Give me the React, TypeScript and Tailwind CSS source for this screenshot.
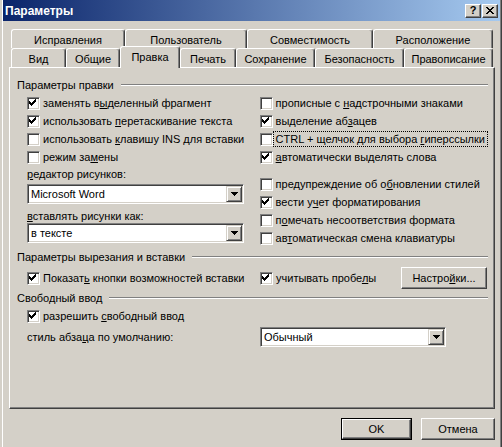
import React from "react";

// access key: the char after "&" gets underlined
function L({ t }: { t: string }) {
  const i = t.indexOf("&");
  if (i < 0) return <>{t}</>;
  return (
    <>
      {t.slice(0, i)}
      <span className="underline decoration-1 underline-offset-[1px]">{t[i + 1]}</span>
      {t.slice(i + 2)}
    </>
  );
}

const raised =
  "bg-[#d4d0c8] border border-t-white border-l-white border-r-[#404040] border-b-[#404040] shadow-[inset_-1px_-1px_0_#808080]";
const sunken =
  "bg-white border border-t-[#808080] border-l-[#808080] border-r-white border-b-white shadow-[inset_1px_1px_0_#404040,inset_-1px_-1px_0_#d4d0c8]";

function Box({ on }: { on?: boolean }) {
  return (
    <span className={`relative block w-[13px] h-[13px] shrink-0 ${sunken}`}>
      {on && (
        <svg className="absolute left-[1px] top-[1px]" width="7" height="7" viewBox="0 0 7 7" shapeRendering="crispEdges">
          {[2, 3, 4, 3, 2, 1, 0].map((y, x) => (
            <rect key={x} x={x} y={y} width="1" height="3" fill="#000" />
          ))}
        </svg>
      )}
    </span>
  );
}

function Check({ on, t, focus }: { on?: boolean; t: string; focus?: boolean }) {
  return (
    <div className="flex h-[18px] items-center">
      <Box on={on} />
      <span
        className={`border px-[2px] leading-[14px] whitespace-nowrap ${
          focus ? "border-dotted border-black" : "border-transparent"
        }`}
      >
        <L t={t} />
      </span>
    </div>
  );
}

function Arrow() {
  return (
    <svg width="7" height="4" viewBox="0 0 7 4" shapeRendering="crispEdges">
      <rect x="0" y="0" width="7" height="1" fill="#000" />
      <rect x="1" y="1" width="5" height="1" fill="#000" />
      <rect x="2" y="2" width="3" height="1" fill="#000" />
      <rect x="3" y="3" width="1" height="1" fill="#000" />
    </svg>
  );
}

function Combo({ w, t }: { w: string; t: string }) {
  return (
    <div className={`flex h-[20px] ${w} ${sunken} p-[1px]`}>
      <span className="flex-1 pl-[2px] leading-[16px] whitespace-nowrap">{t}</span>
      <div className={`w-[16px] h-[16px] flex items-center justify-center border border-t-[#d4d0c8] border-l-[#d4d0c8] border-r-[#404040] border-b-[#404040] bg-[#d4d0c8] shadow-[inset_1px_1px_0_#fff,inset_-1px_-1px_0_#808080]`}>
        <Arrow />
      </div>
    </div>
  );
}

function Group({ t }: { t: string }) {
  return (
    <div className="flex h-[18px] items-center">
      <span className="whitespace-nowrap">{t}</span>
      <div className="ml-[7px] flex-1 border-t border-t-[#808080] border-b border-b-white" />
    </div>
  );
}

function Tab({ w, t, sel }: { w: string; t: string; sel?: boolean }) {
  return (
    <div
      className={`${w} ${
        sel ? "h-[22px] -mb-px relative z-10" : "h-[19px] pt-[3px]"
      } flex items-center justify-center shrink-0 bg-[#d4d0c8] border-t border-l border-r border-t-white border-l-white border-r-[#404040] shadow-[inset_-1px_0_0_#808080] rounded-t-[3px] whitespace-nowrap`}
    >
      {t}
    </div>
  );
}

function TBtn({ children }: { children: React.ReactNode }) {
  return <div className={`w-[16px] h-[14px] flex items-center justify-center ${raised}`}>{children}</div>;
}

function CloseGlyph() {
  const rows = ["XX....XX", ".XX..XX.", "..XXXX..", "...XX...", "..XXXX..", ".XX..XX.", "XX....XX"];
  return (
    <svg width="8" height="7" viewBox="0 0 8 7" shapeRendering="crispEdges">
      {rows.flatMap((r, y) =>
        r.split("").map((c, x) => (c === "X" ? <rect key={`${x}-${y}`} x={x} y={y} width="1" height="1" fill="#000" /> : null))
      )}
    </svg>
  );
}

export default function App() {
  return (
    <div className="w-[502px] h-[447px] overflow-hidden bg-[#d4d0c8] text-black text-[11px] font-['Liberation_Sans',Arial,sans-serif] shadow-[inset_2px_0_0_#d4d0c8,inset_3px_0_0_#fff,inset_-1px_0_0_#404040,inset_-2px_0_0_#808080]">
      {/* title bar */}
      <div className="ml-[3px] w-[497px] h-[21px] flex items-center pl-[2px] pr-[2px] bg-[linear-gradient(to_right,#0a246a,#a6caf0)]">
        <span className="font-bold text-white text-[12px]">Параметры</span>
        <div className="ml-auto flex gap-[1px]">
          <TBtn>
            <span className="font-bold text-[11px] leading-none">?</span>
          </TBtn>
          <TBtn>
            <CloseGlyph />
          </TBtn>
        </div>
      </div>

      {/* tab control */}
      <div className="ml-[9px] mt-[8px] w-[486px]">
        <div className="flex h-[19px] pl-[2px]">
          <Tab w="w-[114px]" t="Исправления" />
          <Tab w="w-[122px]" t="Пользователь" />
          <Tab w="w-[126px]" t="Совместимость" />
          <Tab w="w-[120px]" t="Расположение" />
        </div>
        <div className="flex h-[19px] items-end pl-[2px]">
          <Tab w="w-[55px]" t="Вид" />
          <Tab w="w-[54px]" t="Общие" />
          <Tab w="w-[60px]" t="Правка" sel />
          <Tab w="w-[56px]" t="Печать" />
          <Tab w="w-[79px]" t="Сохранение" />
          <Tab w="w-[89px]" t="Безопасность" />
          <Tab w="w-[89px]" t="Правописание" />
        </div>

        <div className="h-[342px] border border-t-white border-l-white border-r-[#404040] border-b-[#404040] shadow-[inset_-1px_-1px_0_#808080] pt-[8px] pl-[7px] pr-[6px]">
          <Group t="Параметры правки" />
          <div className="flex pl-[10px] h-[153px]">
            <div className="w-[234px]">
              <Check on t="заменять в&ыделенный фрагмент" />
              <Check on t="использовать &перетаскивание текста" />
              <Check t="использовать &клавишу INS для вставки" />
              <Check t="режим за&мены" />
              <div className="h-[16px] leading-[16px]">
                <L t="&редактор рисунков:" />
              </div>
              <div className="mt-[2px]">
                <Combo w="w-[217px]" t="Microsoft Word" />
              </div>
              <div className="mt-[5px] h-[14px] leading-[14px]">
                <L t="&вставлять рисунки как:" />
              </div>
              <Combo w="w-[217px]" t="в тексте" />
            </div>
            <div>
              <Check t="прописные с &надстрочными знаками" />
              <Check on t="выделение аб&зацев" />
              <Check t="CTRL + щелчок для выбора &гиперссылки" focus />
              <Check on t="&автоматически выделять слова" />
              <div className="mt-[9px]">
                <Check t="предупреждение об о&бновлении стилей" />
                <Check on t="вести у&чет форматирования" />
                <Check t="п&омечать несоответствия формата" />
                <Check t="ав&томатическая смена клавиатуры" />
              </div>
            </div>
          </div>

          <div className="mt-px">
            <Group t="Параметры вырезания и вставки" />
          </div>
          <div className="flex h-[22px] mt-px items-center pl-[10px]">
            <div className="w-[233px]">
              <Check on t="Показат&ь кнопки возможностей вставки" />
            </div>
            <Check on t="учитывать пробе&лы" />
            <div className={`ml-auto mr-px w-[86px] h-[22px] flex items-center justify-center ${raised}`}>
              <L t="Настро&йки..." />
            </div>
          </div>

          <Group t="Свободный ввод" />
          <div className="pl-[10px]">
            <Check on t="разрешить &свободный ввод" />
          </div>
          <div className="flex h-[20px] mt-[2px] items-center pl-[10px]">
            <div className="w-[233px]">
              <L t="стиль абза&ца по умолчанию:" />
            </div>
            <Combo w="w-[186px]" t="Обычный" />
          </div>
        </div>

        {/* dialog buttons */}
        <div className="mt-[9px] flex justify-end gap-[9px]">
          <div className="w-[71px] h-[22px] border border-black">
            <div className={`w-full h-full flex items-center justify-center ${raised}`}>OK</div>
          </div>
          <div className={`w-[74px] h-[22px] flex items-center justify-center ${raised}`}>Отмена</div>
        </div>
      </div>
    </div>
  );
}
